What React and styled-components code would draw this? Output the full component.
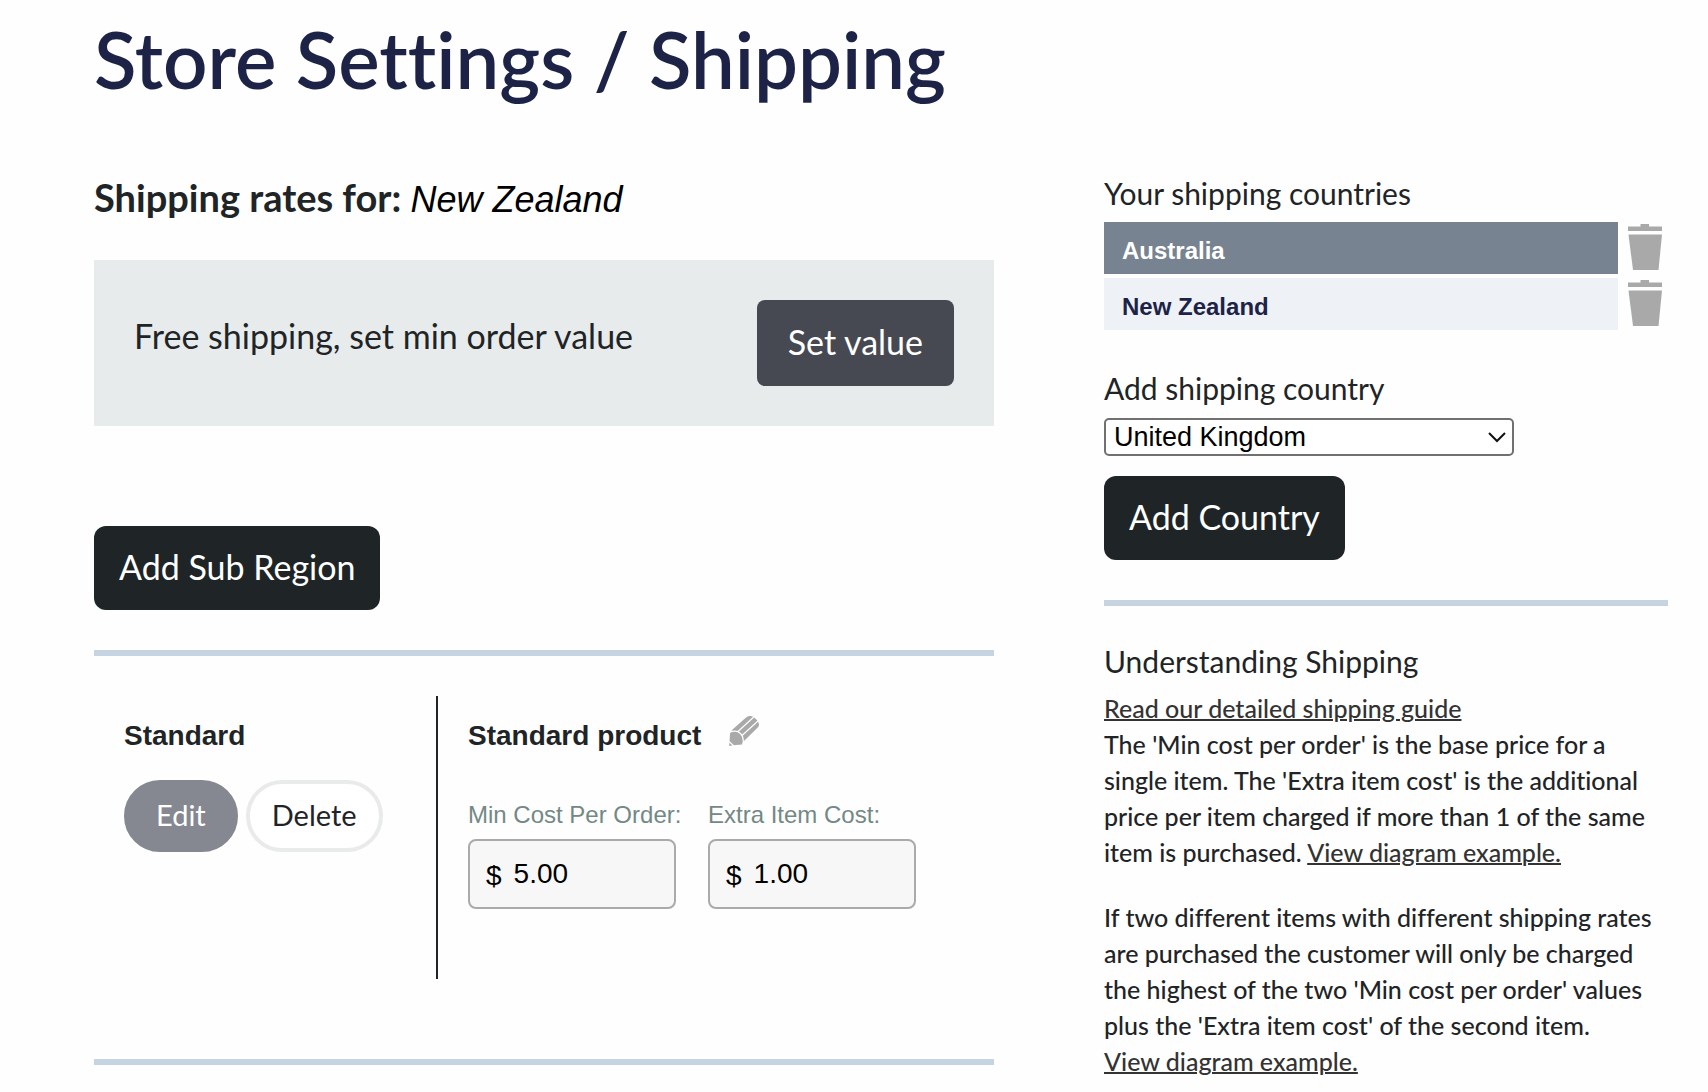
import React, { useState } from "react";
import styled, { createGlobalStyle } from "styled-components";

const humanist = `Lato, "Open Sans", sans-serif`;
const grotesque = `"Liberation Sans", Arial, sans-serif`;
const ink = "#1f2427";
const navy = "#1d2347";

const GlobalStyle = createGlobalStyle`
  *, *::before, *::after { box-sizing: border-box; }
  body {
    margin: 0;
    background: #fefefe;
    color: ${ink};
    font-family: ${humanist};
    font-size: 25px;
    font-variant-ligatures: none;
    font-weight: 500;
    line-height: 36px;
  }
  h1, h2, h3, p, ul { margin: 0; padding: 0; }
  button, input, select { margin: 0; }
`;

const Page = styled.main`
  padding: 15px 40px 27px 94px;
`;

const Title = styled.h1`
  color: ${navy};
  font-size: 78px;
  font-weight: 600;
  line-height: 88px;
  margin-bottom: 72px;
`;

const Columns = styled.div`
  display: grid;
  grid-template-columns: minmax(0, 900fr) minmax(0, 564fr);
  column-gap: 110px;
  align-items: start;
`;

const RatesHeading = styled.h2`
  font-size: 38px;
  font-weight: 700;
  line-height: 44px;
  margin-bottom: 41px;

  em {
    color: #000;
    font-family: ${grotesque};
    font-size: 36px;
    font-weight: 400;
    line-height: 36px;
  }
`;

const FreeShipping = styled.section`
  display: flex;
  justify-content: space-between;
  align-items: flex-start;
  padding: 40px;
  margin-bottom: 100px;
  background: #e7ebec;
`;

const FreeShippingText = styled.p`
  font-size: 34px;
  font-weight: 400;
  line-height: 72px;
`;

const Button = styled.button`
  display: block;
  height: ${(p) => (p.$muted ? 86 : 84)}px;
  padding: 0 ${(p) => (p.$muted ? 31 : 25)}px 4px;
  border: 0;
  border-radius: ${(p) => (p.$muted ? 8 : 12)}px;
  background: ${(p) => (p.$muted ? "#474952" : ink)};
  color: #fff;
  font-family: ${humanist};
  font-size: 34px;
  cursor: pointer;
`;

const Rule = styled.hr`
  height: 6px;
  margin: ${(p) => p.$space}px 0 0;
  border: 0;
  background: #c6d3e1;
`;

const Method = styled.section`
  display: grid;
  grid-template-columns: 344px minmax(0, 1fr);
  margin-top: 40px;
`;

const MethodName = styled.div`
  padding: 20px 0 0 30px;
  border-right: 2px solid ${ink};
`;

const MethodRates = styled.div`
  padding: 20px 0 70px 30px;
`;

const SmallHeading = styled.h3`
  font-family: ${grotesque};
  font-size: 28px;
  font-weight: 700;
  line-height: 40px;
`;

const PillRow = styled.div`
  display: flex;
  gap: 8px;
  margin-top: 24px;
`;

const Pill = styled.button`
  height: 72px;
  padding: 0 ${(p) => (p.$filled ? 28 : 22)}px 4px;
  border: 4px solid ${(p) => (p.$filled ? "#858891" : "#e9ebeb")};
  border-radius: 36px;
  background: ${(p) => (p.$filled ? "#858891" : "#fff")};
  color: ${(p) => (p.$filled ? "#fff" : ink)};
  font-family: ${humanist};
  font-size: 29px;
  cursor: pointer;
`;

const HeadingRow = styled.div`
  display: flex;
  align-items: flex-start;
  gap: 28px;
  margin-bottom: 43px;
`;

const IconButton = styled.button`
  display: flex;
  padding: 0;
  border: 0;
  background: none;
  color: #a9a9a9;
  cursor: pointer;
`;

const Fields = styled.div`
  display: flex;
  gap: 32px;
`;

const Field = styled.div`
  width: 208px;
`;

const FieldLabel = styled.label`
  display: block;
  margin-bottom: 8px;
  color: #738985;
  font-family: ${grotesque};
  font-size: 24px;
  font-weight: 400;
  line-height: 32px;
  white-space: nowrap;
`;

const MoneyBox = styled.div`
  display: flex;
  align-items: center;
  height: 70px;
  padding: 0 16px;
  border: 2px solid #aaa;
  border-radius: 8px;
  background: #f7f7f7;
  color: #000;
  font-family: ${grotesque};
  font-size: 28px;
  font-weight: 400;
`;

const Currency = styled.span`
  padding-top: 4px;
`;

const MoneyInput = styled.input`
  flex: 1;
  min-width: 0;
  padding: 0 0 0 12px;
  border: 0;
  outline: 0;
  background: none;
  color: inherit;
  font: inherit;
`;

const SideHeading = styled.h2`
  font-size: 30px;
  font-weight: 400;
  line-height: 36px;
  margin-bottom: 11px;
`;

const CountryList = styled.ul`
  display: flex;
  flex-direction: column;
  gap: 4px;
  margin-bottom: 40px;
  list-style: none;
`;

const CountryItem = styled.li`
  display: flex;
  align-items: flex-start;
  gap: 10px;
  padding-right: 6px;

  ${IconButton} { padding-top: 2px; }
`;

const CountryLink = styled.a`
  flex: 1;
  height: 52px;
  padding: 3px 18px 0;
  background: ${(p) => (p.$dark ? "#778390" : "#eef1f6")};
  color: ${(p) => (p.$dark ? "#fff" : navy)};
  font-family: ${grotesque};
  font-size: 24px;
  font-weight: 700;
  line-height: 52px;
  text-decoration: none;
`;

const SelectLabel = styled.label`
  display: block;
  margin-bottom: 12px;
  font-size: 30px;
  font-weight: 400;
`;

const SelectWrap = styled.div`
  position: relative;
  width: 410px;
  max-width: 100%;
  margin-bottom: 20px;

  svg {
    position: absolute;
    top: 14px;
    right: 8px;
    pointer-events: none;
  }
`;

const Select = styled.select`
  display: block;
  width: 100%;
  height: 38px;
  padding: 0 32px 0 8px;
  border: 2px solid #707070;
  border-radius: 5px;
  appearance: none;
  background: #fff;
  color: #000;
  font-family: ${grotesque};
  font-size: 27px;
`;

const Guide = styled.section`
  padding-top: 37px;

  p + p { margin-top: 29px; }
`;

const TextLink = styled.a`
  color: #333;
  text-decoration: underline;
  text-decoration-thickness: 2px;
`;

function TrashIcon() {
  return (
    <svg width="34" height="46" viewBox="0 0 34 46" fill="currentColor" aria-hidden="true">
      <path d="M12.500 0h8.500v2.500h13V7H0V2.500h12.500z" />
      <path d="M.5 10.500h33.500L30.500 46H5z" />
    </svg>
  );
}

function PencilIcon() {
  return (
    <svg width="30" height="30" viewBox="0 0 30 30" fill="currentColor" aria-hidden="true">
      <path d="M3.500 13.500 16.500 2C18.500.2 20 0 21.500 0c3 0 8.500 5 8.500 8.500 0 1.500-.8 2.500-1.500 3.200L14.500 25.500 13 28.500l-8.500.8-4.500.7.500-3L1 17.500z" />
      <path
        d="M0 16.500C5 14.500 9 15 11.500 17.500S15 23.500 13.800 29M9 15.500 25 .8M13 19.500 29.500 4.500"
        fill="none"
        stroke="#fefefe"
        strokeWidth="1.200"
      />
      <path d="M0 25.500 4.800 30" stroke="#fefefe" strokeWidth="1.200" />
    </svg>
  );
}

function ChevronIcon() {
  return (
    <svg width="18" height="11" viewBox="0 0 18 11" fill="none" aria-hidden="true">
      <path d="m1 1 8 8 8-8" stroke="#111" strokeWidth="2" />
    </svg>
  );
}

function MoneyField({ id, label, initial }) {
  const [value, setValue] = useState(initial);
  return (
    <Field>
      <FieldLabel htmlFor={id}>{label}</FieldLabel>
      <MoneyBox>
        <Currency>$</Currency>
        <MoneyInput id={id} type="text" value={value} onChange={(e) => setValue(e.target.value)} />
      </MoneyBox>
    </Field>
  );
}

const countries = ["Australia", "New Zealand"];

export default function App() {
  return (
    <>
      <GlobalStyle />
      <Page>
        <Title>Store Settings / Shipping</Title>
        <Columns>
          <div>
            <RatesHeading>
              Shipping rates for: <em>New Zealand</em>
            </RatesHeading>
            <FreeShipping>
              <FreeShippingText>Free shipping, set min order value</FreeShippingText>
              <Button type="button" $muted>Set value</Button>
            </FreeShipping>
            <Button type="button">Add Sub Region</Button>
            <Rule $space={40} />
            <Method>
              <MethodName>
                <SmallHeading>Standard</SmallHeading>
                <PillRow>
                  <Pill type="button" $filled>Edit</Pill>
                  <Pill type="button">Delete</Pill>
                </PillRow>
              </MethodName>
              <MethodRates>
                <HeadingRow>
                  <SmallHeading>Standard product</SmallHeading>
                  <IconButton type="button" aria-label="Edit product">
                    <PencilIcon />
                  </IconButton>
                </HeadingRow>
                <Fields>
                  <MoneyField id="min-cost" label="Min Cost Per Order:" initial="5.00" />
                  <MoneyField id="extra-cost" label="Extra Item Cost:" initial="1.00" />
                </Fields>
              </MethodRates>
            </Method>
            <Rule $space={80} />
          </div>

          <aside>
            <SideHeading>Your shipping countries</SideHeading>
            <CountryList>
              {countries.map((name, i) => (
                <CountryItem key={name}>
                  <CountryLink href="#" $dark={i === 0}>{name}</CountryLink>
                  <IconButton type="button" aria-label={`Remove ${name}`}>
                    <TrashIcon />
                  </IconButton>
                </CountryItem>
              ))}
            </CountryList>
            <SelectLabel htmlFor="country">Add shipping country</SelectLabel>
            <SelectWrap>
              <Select id="country" defaultValue="United Kingdom">
                <option>United Kingdom</option>
              </Select>
              <ChevronIcon />
            </SelectWrap>
            <Button type="button">Add Country</Button>
            <Rule $space={40} />
            <Guide>
              <SideHeading>Understanding Shipping</SideHeading>
              <p>
                <TextLink href="#">Read our detailed shipping guide</TextLink>
                <br />
                The 'Min cost per order' is the base price for a single item. The 'Extra item
                cost' is the additional price per item charged if more than 1 of the same item
                is purchased. <TextLink href="#">View diagram example.</TextLink>
              </p>
              <p>
                If two different items with different shipping rates are purchased the customer
                will only be charged the highest of the two 'Min cost per order' values plus
                the 'Extra item cost' of the second item.
                <br />
                <TextLink href="#">View diagram example.</TextLink>
              </p>
            </Guide>
          </aside>
        </Columns>
      </Page>
    </>
  );
}
